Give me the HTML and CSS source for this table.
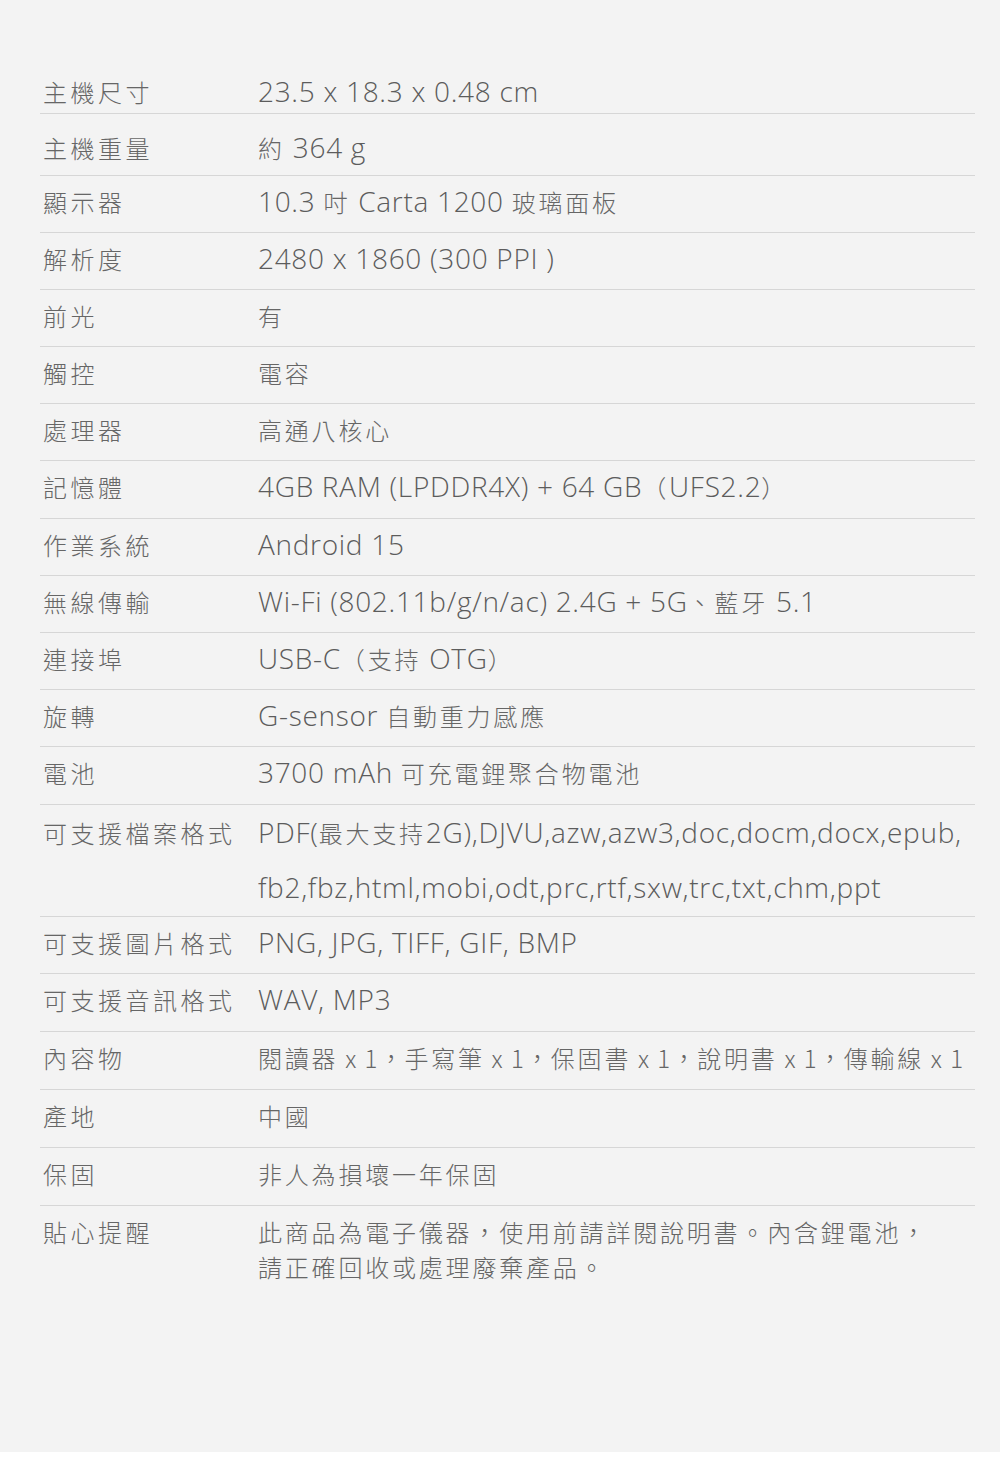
FILE: index.html
```html
<!DOCTYPE html>
<html lang="zh-Hant">
<head>
<meta charset="utf-8">
<title>規格</title>
<link rel="stylesheet" href="styles.css">
</head>
<body>
<div class="page">
  <div class="spec">
    <div class="row first"><div class="label">主機尺寸</div><div class="val">23.5 x 18.3 x 0.48 cm</div></div>
    <div class="row second"><div class="label">主機重量</div><div class="val"><span class="zh">約</span> 364 g</div></div>
    <div class="row"><div class="label">顯示器</div><div class="val">10.3 <span class="zh">吋</span> Carta 1200 <span class="zh">玻璃面板</span></div></div>
    <div class="row"><div class="label">解析度</div><div class="val">2480 x 1860 (300 PPI )</div></div>
    <div class="row"><div class="label">前光</div><div class="val"><span class="zh">有</span></div></div>
    <div class="row"><div class="label">觸控</div><div class="val"><span class="zh">電容</span></div></div>
    <div class="row"><div class="label">處理器</div><div class="val"><span class="zh">高通八核心</span></div></div>
    <div class="row"><div class="label">記憶體</div><div class="val">4GB RAM (LPDDR4X) + 64 GB<span class="zh">（</span>UFS2.2<span class="zh">）</span></div></div>
    <div class="row"><div class="label">作業系統</div><div class="val">Android 15</div></div>
    <div class="row"><div class="label">無線傳輸</div><div class="val">Wi-Fi (802.11b/g/n/ac) 2.4G + 5G<span class="zh">、藍牙</span> 5.1</div></div>
    <div class="row"><div class="label">連接埠</div><div class="val">USB-C<span class="zh">（支持</span> OTG<span class="zh">）</span></div></div>
    <div class="row"><div class="label">旋轉</div><div class="val">G-sensor <span class="zh">自動重力感應</span></div></div>
    <div class="row"><div class="label">電池</div><div class="val">3700 mAh <span class="zh">可充電鋰聚合物電池</span></div></div>
    <div class="row tall"><div class="label">可支援檔案格式</div><div class="val">PDF(<span class="zh">最大支持</span>2G),DJVU,azw,azw3,doc,docm,docx,epub,<br>fb2,fbz,html,mobi,odt,prc,rtf,sxw,trc,txt,chm,ppt</div></div>
    <div class="row"><div class="label">可支援圖片格式</div><div class="val">PNG, JPG, TIFF, GIF, BMP</div></div>
    <div class="row"><div class="label">可支援音訊格式</div><div class="val">WAV, MP3</div></div>
    <div class="row"><div class="label">內容物</div><div class="val"><span class="zh">閱讀器<span class="tight"> x 1，</span>手寫筆<span class="tight"> x 1，</span>保固書<span class="tight"> x 1，</span>說明書<span class="tight"> x 1，</span>傳輸線<span class="tight"> x 1</span></span></div></div>
    <div class="row"><div class="label">產地</div><div class="val"><span class="zh">中國</span></div></div>
    <div class="row"><div class="label">保固</div><div class="val"><span class="zh">非人為損壞一年保固</span></div></div>
    <div class="row"><div class="label">貼心提醒</div><div class="val"><span class="zh">此商品為電子儀器，使用前請詳閱說明書。內含鋰電池，<br>請正確回收或處理廢棄產品。</span></div></div>
  </div>
</div>
</body>
</html>
```

FILE: styles.css
```css
body {
  margin: 0;
  background: #ffffff;
  font-family: "Open Sans", "Noto Sans CJK TC", sans-serif;
  color: #636363;
}

.page {
  background: #f3f3f3;
  height: 1452px;
  padding-top: 65.5px;
  box-sizing: border-box;
}

.spec {
  margin: 0 25px 0 40px;
}

.row {
  display: grid;
  grid-template-columns: 218px 1fr;
  padding: 8px 0 13.2px;
  border-top: 1px solid #d6d6d6;
}

.row.first {
  border-top: 0;
  padding-bottom: 4px;
}

.row.second {
  padding: 16.5px 0 9.5px;
}

.row.tall {
  padding: 0;
}

.row.tall ~ .row {
  padding-bottom: 13.8px;
}

.row.tall .label,
.row.tall .val {
  line-height: 55.5px;
}

.label {
  padding-left: 3px;
  font-family: "Noto Sans CJK TC", sans-serif;
  font-size: 24px;
  font-weight: 300;
  letter-spacing: 3.5px;
  line-height: 35px;
  white-space: nowrap;
  color: #666666;
}

.val {
  font-size: 28px;
  font-weight: 300;
  letter-spacing: 0.7px;
  line-height: 35px;
  white-space: nowrap;
  color: #5c5c5c;
}

.zh {
  font-family: "Noto Sans CJK TC", sans-serif;
  font-size: 24px;
  font-weight: 300;
  letter-spacing: 2.8px;
  color: #666666;
}

.zh .tight {
  letter-spacing: 1.5px;
}
```
